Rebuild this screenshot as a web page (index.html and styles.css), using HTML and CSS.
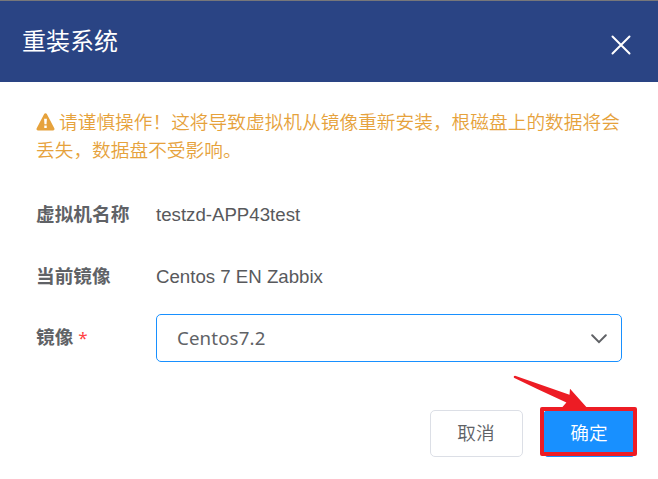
FILE: index.html
```html
<!DOCTYPE html>
<html lang="zh-CN">
<head>
<meta charset="utf-8">
<title>重装系统</title>
<link rel="stylesheet" href="styles.css">
</head>
<body>
<div class="dialog">
  <header class="dialog-header">
    <h1 class="dialog-title">重装系统</h1>
    <svg class="close" viewBox="0 0 20 20" aria-label="关闭"><path d="M1.500 1.500l17 17M18.500 1.500l-17 17"/></svg>
  </header>
  <main class="dialog-body">
    <p class="warning"><svg class="warning-icon" viewBox="0 0 20 19"><path fill-rule="evenodd" d="M10 .3c.6 0 1.100.3 1.400.8l7.900 15c.6 1.200-.1 2.300-1.400 2.300H2.100c-1.300 0-2-1.100-1.400-2.300l7.900-15C8.900.6 9.400.3 10 .3zM8.500 6.100l.4 5.700h2.200l.4-5.700zM8.700 13.300v2.500h2.600v-2.500z"/></svg>请谨慎操作！这将导致虚拟机从镜像重新安装，根磁盘上的数据将会丢失，数据盘不受影响。</p>
    <div class="row">
      <span class="label">虚拟机名称</span>
      <span class="value">testzd-APP43test</span>
    </div>
    <div class="row">
      <span class="label">当前镜像</span>
      <span class="value">Centos 7 EN Zabbix</span>
    </div>
    <div class="row row-select">
      <span class="label">镜像<span class="required">*</span></span>
      <div class="select">
        <span class="select-text">Centos7.2</span>
        <svg class="chevron" viewBox="0 0 16 10"><path d="M1.200 1.300L8 8.100l6.800-6.800"/></svg>
      </div>
    </div>
  </main>
  <footer class="dialog-footer">
    <button class="btn">取消</button>
    <div class="confirm">
      <button class="btn btn-primary">确定</button>
      <span class="highlight"></span>
      <svg class="arrow" viewBox="0 0 76 34"><path d="M.8 1.400Q1.200.6 2.800.9L56.500 19.800 57 13.700 74 32.800H48.800L53.400 27.600Q27 15.500 1.400 3Q.5 2.500.8 1.400z"/></svg>
    </div>
  </footer>
</div>
</body>
</html>
```

FILE: styles.css
```css
* { box-sizing: border-box; }

body {
  margin: 0;
  background: #fff;
  color: #606266;
  font-family: "Liberation Sans", "Noto Sans CJK SC", sans-serif;
  font-size: 18.67px;
}

.dialog { height: 479px; overflow: hidden; }

.dialog-header {
  display: flex;
  justify-content: space-between;
  height: 82px;
  padding: 0 27px 0 22px;
  border-top: 1px solid #77777a;
  background: #2a4484;
  color: #fff;
}

.dialog-title {
  margin: 23px 0 0;
  font-size: 24px;
  font-weight: 400;
  line-height: 36px;
}

.close { width: 20px; height: 20px; margin-top: 34px; }
.close path { fill: none; stroke: #fff; stroke-width: 2; stroke-linecap: round; }

.dialog-body { padding: 27px 36px 0; }

.warning {
  margin: 0 -4px 19px 0;
  color: #e6a23c;
  font-weight: 350;
  line-height: 28px;
  letter-spacing: .04px;
}

.warning-icon {
  width: 19px;
  height: 18px;
  margin-right: 4px;
  vertical-align: -2px;
  fill: #e6a23c;
}

.row { display: flex; align-items: center; height: 62px; }
.row-select { height: 60px; }
.label { width: 120px; padding-bottom: 6px; font-weight: 700; }
.value { color: #58595c; }
.required {
  margin-left: 5px;
  color: #f44;
  font-family: "Noto Sans", sans-serif;
  font-size: 17px;
  font-weight: 400;
  line-height: 1;
}

.select {
  display: flex;
  flex: 1;
  align-items: center;
  justify-content: space-between;
  height: 48px;
  padding: 0 14px 0 20px;
  border: 1px solid #1890ff;
  border-radius: 5px;
  font-family: "Noto Sans", sans-serif;
  letter-spacing: .15px;
}

.select-text { padding-bottom: 2px; }

.chevron { width: 16px; height: 10px; margin-top: 1px; }
.chevron path { fill: none; stroke: #606266; stroke-width: 2; stroke-linecap: round; }

.dialog-footer {
  display: flex;
  justify-content: flex-end;
  gap: 20px;
  padding: 42px 22px 0 0;
}

.btn {
  display: block;
  width: 93px;
  height: 47px;
  padding: 0 1px 4px 0;
  border: 1px solid #dcdfe6;
  border-radius: 5px;
  background: #fff;
  color: #606266;
  font: inherit;
  font-weight: 350;
}

.btn-primary { border-color: #1890ff; background: #1890ff; color: #fff; }

.confirm { position: relative; }

.highlight {
  position: absolute;
  top: -3px;
  left: -3px;
  width: 97px;
  height: 49px;
  border: 4px solid #ed1c24;
  border-radius: 2px;
}

.arrow {
  position: absolute;
  top: -35px;
  left: -30px;
  width: 76px;
  height: 34px;
  fill: #ed1c24;
}
```
